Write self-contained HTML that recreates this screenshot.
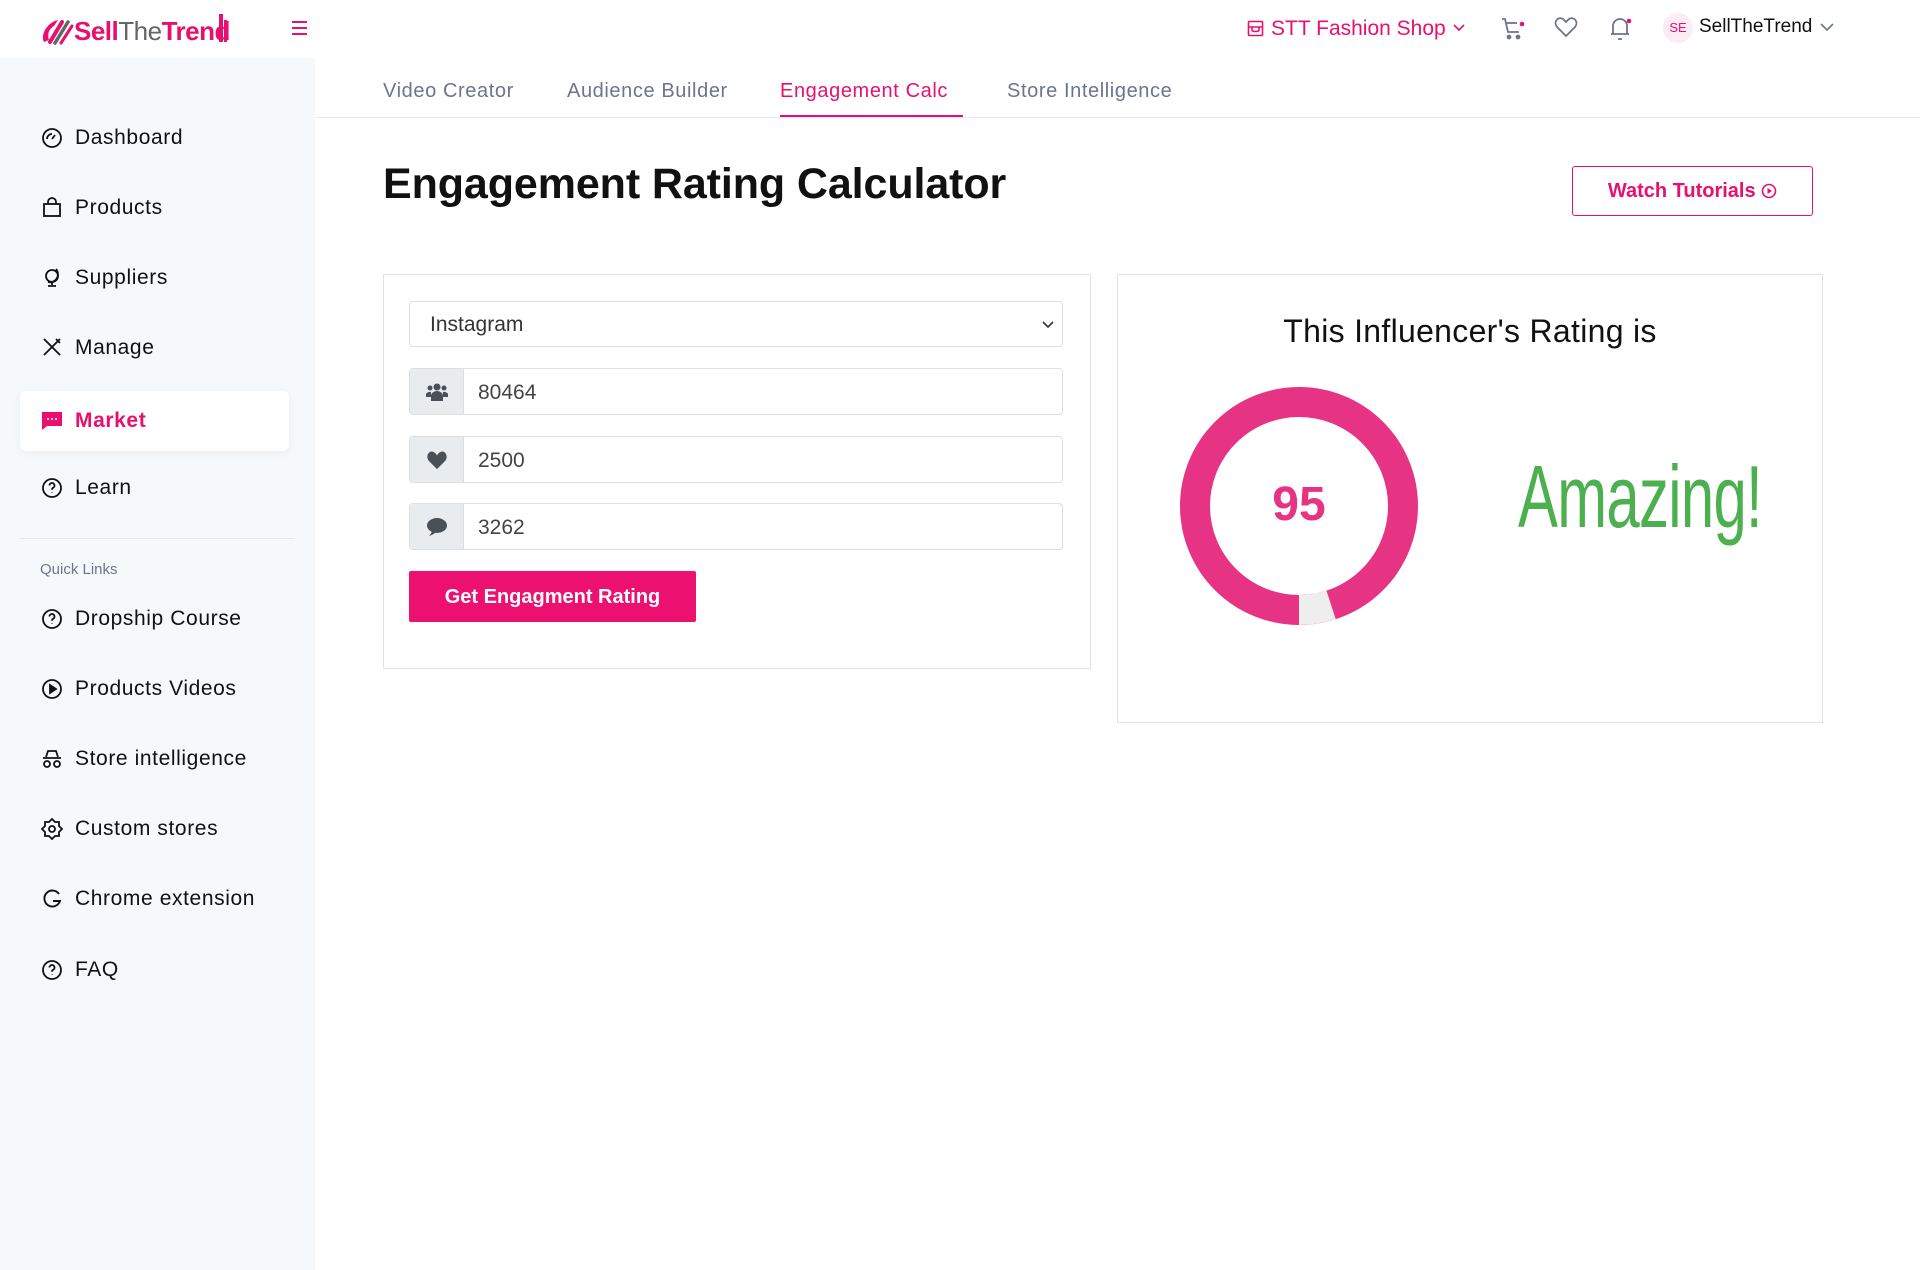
<!DOCTYPE html>
<html><head><meta charset="utf-8"><style>
*{box-sizing:border-box;margin:0;padding:0}
body{width:1920px;height:1270px;background:#fff;font-family:"Liberation Sans",sans-serif;color:#111;position:relative;overflow:hidden}
.a{position:absolute;white-space:nowrap}
.side{position:absolute;left:0;top:58px;width:315px;height:1212px;background:#f5f9fc}
.nav{position:absolute;left:75px;font-size:21px;color:#111;line-height:24px;letter-spacing:0.6px}
.ic{position:absolute;left:41px;width:22px;height:22px}
.tab{position:absolute;top:80px;font-size:20px;color:#6b7590;letter-spacing:0.6px}
.box{position:absolute;border:1px solid #e3e3e3;background:#fff}
.inp{position:absolute;left:409px;width:654px;height:47px;border:1px solid #dedede;border-radius:4px;background:#fff}
.add{position:absolute;left:0;top:0;width:54px;height:45px;background:#e9ecef;border-right:1px solid #dedede;border-radius:4px 0 0 4px;display:flex;align-items:center;justify-content:center}
.val{position:absolute;left:68px;top:12px;font-size:21px;color:#444}
</style></head><body>
<!-- logo -->
<svg class="a" style="left:40px;top:16px" width="34" height="30" viewBox="0 0 34 30"><path d="M4 26 C0 18 8 6 18 4 L14 10 C9 13 7 18 9 24Z" fill="#e8106e"/><path d="M10 26 L22 6" stroke="#e8106e" stroke-width="4" stroke-linecap="round"/><path d="M15 27 L28 6" stroke="#666" stroke-width="3.5" stroke-linecap="round"/><path d="M21 27 L32 10" stroke="#e8106e" stroke-width="3" stroke-linecap="round"/></svg>
<div class="a" style="left:74px;top:16px;font-size:26px;letter-spacing:-0.5px;line-height:30px"><b style="color:#e8106e">Sell</b><span style="color:#666">The</span><b style="color:#e8106e">Trend</b></div>
<div class="a" style="left:219px;top:14px;width:4px;height:28px;background:#e8106e"></div>
<div class="a" style="left:224px;top:20px;width:3px;height:22px;background:#e8106e"></div>
<div class="a" style="left:292px;top:21px;width:15px;height:2px;background:#e8106e;box-shadow:0 6px 0 #e8106e,0 12px 0 #e8106e"></div>
<!-- header right -->
<svg class="a" style="left:1247px;top:20px" width="17" height="17" viewBox="0 0 17 17" fill="none" stroke="#e8106e" stroke-width="1.6"><rect x="1.5" y="1.5" width="14" height="14" rx="1"/><path d="M1.5 7h14M5 7v3M12 7v3M5 10c0 2 7 2 7 0"/></svg>
<div class="a" style="left:1271px;top:17px;font-size:21px;color:#e8106e">STT Fashion Shop</div>
<svg class="a" style="left:1453px;top:24px" width="12" height="8"><path d="M1 1l5 5 5-5" stroke="#e8106e" stroke-width="1.6" fill="none"/></svg>
<svg class="a" style="left:1500px;top:16px" width="26" height="26" viewBox="0 0 26 26" fill="none" stroke="#6b7590" stroke-width="1.8"><path d="M2 3h3l3 13h11"/><path d="M6 7h11"/><circle cx="9" cy="21" r="1.5" fill="#6b7590"/><circle cx="18" cy="21" r="1.5" fill="#6b7590"/><circle cx="22" cy="8" r="2.3" fill="#e8106e" stroke="none"/></svg>
<svg class="a" style="left:1554px;top:16px" width="24" height="22" viewBox="0 0 24 22"><path d="M12 20 L3 11 C-1 6 4 0 9 3 L12 6 L15 3 C20 0 25 6 21 11Z" fill="none" stroke="#6b7590" stroke-width="1.8"/></svg>
<svg class="a" style="left:1608px;top:14px" width="26" height="28" viewBox="0 0 26 28" fill="none" stroke="#6b7590" stroke-width="1.8"><path d="M5 20V12a7 7 0 0 1 14 0v8M3 20h18M10 25h4"/><circle cx="21" cy="7" r="2.3" fill="#e8106e" stroke="none"/></svg>
<div class="a" style="left:1663px;top:13px;width:30px;height:30px;border-radius:50%;background:#fcecf3;color:#e8106e;font-size:13px;text-align:center;line-height:30px">SE</div>
<div class="a" style="left:1699px;top:16px;font-size:19px;color:#111">SellTheTrend</div>
<svg class="a" style="left:1820px;top:23px" width="14" height="9"><path d="M1 1l6 6 6-6" stroke="#6b7590" stroke-width="1.6" fill="none"/></svg>
<!-- sidebar -->
<div class="side"></div>
<div class="a" style="left:20px;top:391px;width:269px;height:60px;background:#fff;border-radius:6px;box-shadow:0 2px 8px rgba(0,0,0,.05)"></div>
<svg class="ic" style="top:127px" viewBox="0 0 22 22" fill="none" stroke="#111" stroke-width="1.8"><circle cx="11" cy="11" r="9"/><path d="M11 12l3-4M6 12a5 5 0 0 1 5-5"/></svg>
<div class="nav" style="top:126px">Dashboard</div>
<svg class="ic" style="top:196px" viewBox="0 0 22 22" fill="none" stroke="#111" stroke-width="1.8"><rect x="3" y="8" width="16" height="12"/><path d="M7 8V6a4 4 0 0 1 8 0v2"/></svg>
<div class="nav" style="top:196px">Products</div>
<svg class="ic" style="top:266px" viewBox="0 0 22 22" fill="none" stroke="#111" stroke-width="1.8"><circle cx="11" cy="10" r="6"/><path d="M15 3a8 8 0 0 1-8 13M11 16v3M7 20h8"/></svg>
<div class="nav" style="top:266px">Suppliers</div>
<svg class="ic" style="top:336px" viewBox="0 0 22 22" fill="none" stroke="#111" stroke-width="1.8"><path d="M3 3l16 16M19 3L3 19M15 3l4 4"/></svg>
<div class="nav" style="top:336px">Manage</div>
<svg class="ic" style="top:410px" viewBox="0 0 22 22"><path d="M1 2h20v14H6l-5 4z" fill="#e8106e"/><circle cx="7" cy="9" r="1" fill="#fff"/><circle cx="11" cy="9" r="1" fill="#fff"/><circle cx="15" cy="9" r="1" fill="#fff"/></svg>
<div class="nav" style="top:409px;color:#e8106e;font-weight:bold">Market</div>
<svg class="ic" style="top:477px" viewBox="0 0 22 22" fill="none" stroke="#111" stroke-width="1.8"><circle cx="11" cy="11" r="9"/><path d="M8.5 8.5a2.5 2.5 0 1 1 3.5 2.3c-1 .5-1 1-1 2M11 15.5v.5"/></svg>
<div class="nav" style="top:476px">Learn</div>
<div class="a" style="left:20px;top:538px;width:275px;height:1px;background:#e3e8ee"></div>
<div class="a" style="left:40px;top:561px;font-size:15px;color:#6b7590">Quick Links</div>
<svg class="ic" style="top:608px" viewBox="0 0 22 22" fill="none" stroke="#111" stroke-width="1.8"><circle cx="11" cy="11" r="9"/><path d="M8.5 8.5a2.5 2.5 0 1 1 3.5 2.3c-1 .5-1 1-1 2M11 15.5v.5"/></svg>
<div class="nav" style="top:607px">Dropship Course</div>
<svg class="ic" style="top:678px" viewBox="0 0 22 22" fill="none" stroke="#111" stroke-width="1.8"><circle cx="11" cy="11" r="9"/><path d="M9 7v8l6-4z" fill="#111"/></svg>
<div class="nav" style="top:677px">Products Videos</div>
<svg class="ic" style="top:748px" viewBox="0 0 22 22" fill="none" stroke="#111" stroke-width="1.8"><path d="M5 9l2-6h8l2 6M2 10h18"/><circle cx="6" cy="16" r="3"/><circle cx="16" cy="16" r="3"/></svg>
<div class="nav" style="top:747px">Store intelligence</div>
<svg class="ic" style="top:818px" viewBox="0 0 22 22" fill="none" stroke="#111" stroke-width="1.8"><path d="M11 1l3 3h4v4l3 3-3 3v4h-4l-3 3-3-3H4v-4l-3-3 3-3V4h4z"/><circle cx="11" cy="11" r="3"/></svg>
<div class="nav" style="top:817px">Custom stores</div>
<svg class="ic" style="top:888px" viewBox="0 0 22 22" fill="none" stroke="#111" stroke-width="1.9"><path d="M18 6a8 8 0 1 0 1 7h-7"/></svg>
<div class="nav" style="top:887px">Chrome extension</div>
<svg class="ic" style="top:959px" viewBox="0 0 22 22" fill="none" stroke="#111" stroke-width="1.8"><circle cx="11" cy="11" r="9"/><path d="M8.5 8.5a2.5 2.5 0 1 1 3.5 2.3c-1 .5-1 1-1 2M11 15.5v.5"/></svg>
<div class="nav" style="top:958px">FAQ</div>
<!-- tabs -->
<div class="tab" style="left:383px">Video Creator</div>
<div class="tab" style="left:567px">Audience Builder</div>
<div class="tab" style="left:780px;color:#e8106e">Engagement Calc</div>
<div class="tab" style="left:1007px">Store Intelligence</div>
<div class="a" style="left:315px;top:117px;width:1605px;height:1px;background:#e8ebef"></div>
<div class="a" style="left:780px;top:115px;width:183px;height:2px;background:#e8106e"></div>
<!-- title -->
<div class="a" style="left:383px;top:160px;font-size:43px;font-weight:bold;color:#111;letter-spacing:-0.1px">Engagement Rating Calculator</div>
<div class="a" style="left:1572px;top:166px;width:241px;height:50px;border:1.5px solid #e8106e;border-radius:3px;color:#e8106e;font-size:20px;font-weight:bold;text-align:center;line-height:49px">Watch Tutorials <svg width="16" height="16" viewBox="0 0 16 16" style="vertical-align:-2px"><circle cx="8" cy="8" r="6.5" fill="none" stroke="#e8106e" stroke-width="1.6"/><path d="M6.5 5v6l4.5-3z" fill="#e8106e"/></svg></div>
<!-- left card -->
<div class="box" style="left:383px;top:274px;width:708px;height:395px"></div>
<div class="inp" style="top:301px;height:46px"><div class="val" style="left:20px;top:11px;color:#333">Instagram</div><svg class="a" style="right:8px;top:19px" width="12" height="8"><path d="M1 1l5 5 5-5" stroke="#333" stroke-width="1.6" fill="none"/></svg></div>
<div class="inp" style="top:368px"><div class="add"><svg width="24" height="20" viewBox="0 0 24 20" fill="#495057"><circle cx="12" cy="5" r="3.5"/><circle cx="5" cy="6" r="2.5"/><circle cx="19" cy="6" r="2.5"/><path d="M6 19v-5a6 5 0 0 1 12 0v5z"/><path d="M1 15v-3a4 3 0 0 1 5-2v5zM23 15v-3a4 3 0 0 0-5-2v5z"/></svg></div><div class="val">80464</div></div>
<div class="inp" style="top:436px"><div class="add"><svg width="22" height="20" viewBox="0 0 24 22"><path d="M12 21 L3 12 C-1 7 3 0 8 2 C10 3 11 4 12 6 C13 4 14 3 16 2 C21 0 25 7 21 12Z" fill="#495057"/></svg></div><div class="val">2500</div></div>
<div class="inp" style="top:503px"><div class="add"><svg width="22" height="20" viewBox="0 0 22 20"><ellipse cx="11" cy="8.5" rx="10" ry="7.5" fill="#495057"/><path d="M3 19 C5 17 6 15 6 13 L10 15 C8 17 6 18 3 19Z" fill="#495057"/></svg></div><div class="val">3262</div></div>
<div class="a" style="left:409px;top:571px;width:287px;height:51px;background:#ec1171;border-radius:2px;color:#fff;font-size:20px;font-weight:bold;text-align:center;line-height:53px">Get Engagment Rating</div>
<!-- right card -->
<div class="box" style="left:1117px;top:274px;width:706px;height:449px"></div>
<div class="a" style="left:1117px;width:706px;top:313px;text-align:center;font-size:32px;color:#111;letter-spacing:0.3px">This Influencer's Rating is</div>
<svg class="a" style="left:0;top:0" width="1920" height="1270"><circle cx="1299" cy="506" r="104" fill="none" stroke="#e63384" stroke-width="30"/><path d="M1331.1 604.9 A104 104 0 0 1 1299 610" fill="none" stroke="#eeeeee" stroke-width="30"/></svg>
<div class="a" style="left:1219px;width:160px;top:477px;text-align:center;font-size:48px;font-weight:bold;color:#e63384">95</div>
<div class="a" style="left:1518px;top:446px;font-size:88px;color:#4caf50;transform:scaleX(0.68);transform-origin:left top;letter-spacing:-1px;font-family:'Liberation Sans Narrow','Liberation Sans',sans-serif">Amazing!</div>
</body></html>
